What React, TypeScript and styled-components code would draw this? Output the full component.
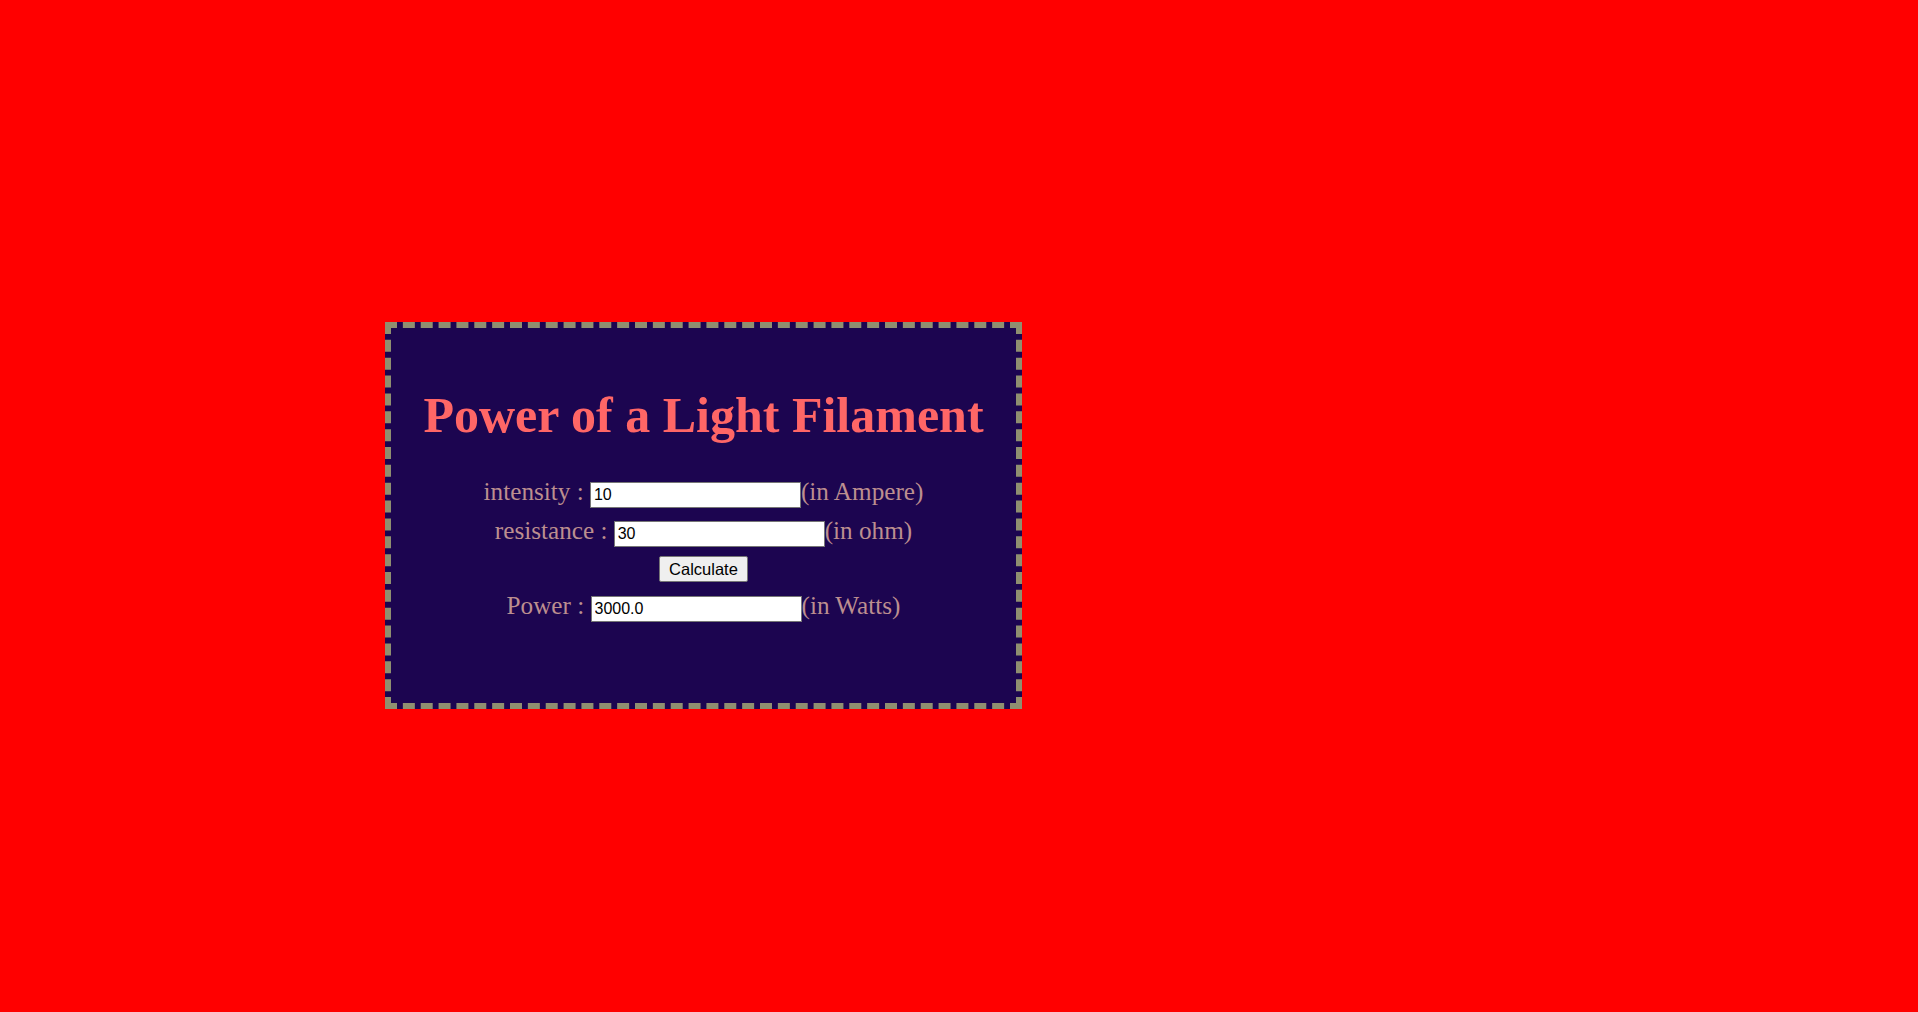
import React, { useState } from "react";
import styled, { createGlobalStyle } from "styled-components";

const GlobalStyle = createGlobalStyle`
  html, body {
    margin: 0;
    padding: 0;
    background: #ff0000;
    min-height: 100%;
  }
  body {
    font-family: "Liberation Serif", "Times New Roman", serif;
  }
`;

const Page = styled.div`
  min-height: 1012px;
  box-sizing: border-box;
  padding: 322px 0 0 385px;
  background: #ff0000;
`;

const Card = styled.div`
  box-sizing: border-box;
  width: 637px;
  height: 387px;
  border: 6px dashed #8f8f70;
  background: #1c0550;
  padding-top: 60px;
  display: flex;
  flex-direction: column;
  align-items: center;
`;

const Title = styled.h1`
  margin: 0;
  font-family: "Liberation Serif", "Times New Roman", serif;
  font-weight: bold;
  font-size: 50px;
  line-height: 55px;
  color: #ff6666;
  text-align: center;
`;

const Form = styled.div`
  margin-top: 35px;
  display: flex;
  flex-direction: column;
  align-items: center;
  width: 100%;
`;

const Row = styled.div<{ $h: number }>`
  display: flex;
  justify-content: center;
  align-items: baseline;
  height: ${(p) => p.$h}px;
  font-family: "Liberation Serif", "Times New Roman", serif;
  font-size: 25.2px;
  line-height: 28px;
  color: #bc8f8f;
`;

const Label = styled.span`
  margin-right: 0.25em;
  white-space: nowrap;
`;

const Unit = styled.span`
  white-space: nowrap;
`;

const Field = styled.input`
  box-sizing: border-box;
  width: 211px;
  height: 26px;
  margin: 0;
  padding: 1px 3px;
  font-family: "Liberation Sans", Arial, sans-serif;
  font-size: 16px;
  color: #000;
  background: #fff;
  border: 1px solid #767676;
  border-radius: 0;
`;

const Button = styled.button`
  box-sizing: border-box;
  height: 26px;
  margin: 0;
  padding: 1px 9px;
  font-family: "Liberation Sans", Arial, sans-serif;
  font-size: 16.5px;
  color: #000;
  background: #efefef;
  border: 1px solid #767676;
  border-radius: 2px;
`;

export default function App() {
  const [intensity, setIntensity] = useState("10");
  const [resistance, setResistance] = useState("30");
  const [power, setPower] = useState("3000.0");

  const calc = () => {
    const i = parseFloat(intensity);
    const r = parseFloat(resistance);
    if (!isNaN(i) && !isNaN(r)) setPower((r * i * i).toFixed(1));
  };

  return (
    <>
      <GlobalStyle />
      <Page>
        <Card>
          <Title>Power of a Light Filament</Title>
          <Form>
            <Row $h={39}>
              <Label>intensity :</Label>
              <Field value={intensity} onChange={(e) => setIntensity(e.target.value)} />
              <Unit>(in Ampere)</Unit>
            </Row>
            <Row $h={39}>
              <Label>resistance :</Label>
              <Field value={resistance} onChange={(e) => setResistance(e.target.value)} />
              <Unit>(in ohm)</Unit>
            </Row>
            <Row $h={36}>
              <Button onClick={calc}>Calculate</Button>
            </Row>
            <Row $h={39}>
              <Label>Power :</Label>
              <Field value={power} readOnly />
              <Unit>(in Watts)</Unit>
            </Row>
          </Form>
        </Card>
      </Page>
    </>
  );
}
